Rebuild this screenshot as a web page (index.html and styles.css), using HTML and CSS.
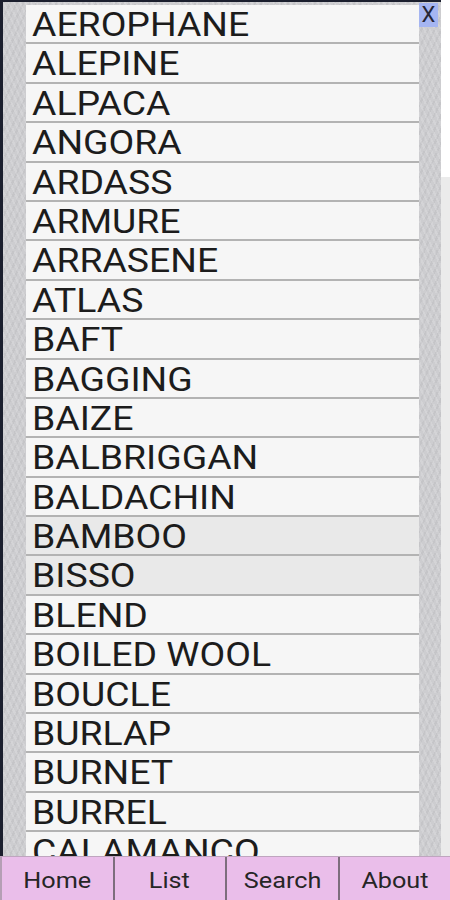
FILE: index.html
```html
<!DOCTYPE html>
<html>
<head>
<meta charset="utf-8">
<link rel="stylesheet" href="styles.css">
</head>
<body>
<div class="screen">
  <div class="main">
    <div class="panel">
      <ul class="list">
        <li class="row"><span class="label">AEROPHANE</span></li>
        <li class="row"><span class="label">ALEPINE</span></li>
        <li class="row"><span class="label">ALPACA</span></li>
        <li class="row"><span class="label">ANGORA</span></li>
        <li class="row"><span class="label">ARDASS</span></li>
        <li class="row"><span class="label">ARMURE</span></li>
        <li class="row"><span class="label">ARRASENE</span></li>
        <li class="row"><span class="label">ATLAS</span></li>
        <li class="row"><span class="label">BAFT</span></li>
        <li class="row"><span class="label">BAGGING</span></li>
        <li class="row"><span class="label">BAIZE</span></li>
        <li class="row"><span class="label">BALBRIGGAN</span></li>
        <li class="row"><span class="label">BALDACHIN</span></li>
        <li class="row selected"><span class="label">BAMBOO</span></li>
        <li class="row selected"><span class="label">BISSO</span></li>
        <li class="row"><span class="label">BLEND</span></li>
        <li class="row"><span class="label">BOILED WOOL</span></li>
        <li class="row"><span class="label">BOUCLE</span></li>
        <li class="row"><span class="label">BURLAP</span></li>
        <li class="row"><span class="label">BURNET</span></li>
        <li class="row"><span class="label">BURREL</span></li>
        <li class="row"><span class="label">CALAMANCO</span></li>
      </ul>
      <div class="side">
        <button class="close">X</button>
      </div>
    </div>
    <div class="edge"></div>
  </div>
  <nav class="nav">
    <a class="tab"><span class="tab-label">Home</span></a>
    <a class="tab"><span class="tab-label">List</span></a>
    <a class="tab"><span class="tab-label">Search</span></a>
    <a class="tab"><span class="tab-label">About</span></a>
  </nav>
</div>
</body>
</html>
```
FILE: styles.css
```css
html, body {
  margin: 0;
  padding: 0;
}
body {
  background: #1b1f2e;
  font-family: Roboto, "Liberation Sans", Arial, sans-serif;
}
.screen {
  width: 450px;
  height: 900px;
  display: flex;
  flex-direction: column;
  overflow: hidden;
}
.main {
  flex: 1;
  display: flex;
  min-height: 0;
  padding-left: 3px;
}
.panel {
  width: 438px;
  margin-top: 2px;
  display: flex;
  padding-left: 23px;
  box-sizing: border-box;
  background-color: #cdcdd0;
  background-image:
    repeating-linear-gradient(65deg, rgba(255,255,255,0.14) 0 2px, rgba(0,0,0,0) 2px 5px),
    repeating-linear-gradient(-65deg, rgba(0,0,0,0.04) 0 2px, rgba(0,0,0,0) 2px 6px);
  overflow: hidden;
}
.list {
  list-style: none;
  margin: 3px 0 0 0;
  padding: 0;
  width: 393px;
  flex: none;
}
.row {
  height: 37.4px;
  box-sizing: content-box;
  border-bottom: 2px solid #b3b3b3;
  background: #f6f6f6;
  color: #1c1c1c;
  font-size: 32.5px;
  line-height: 40px;
  padding-left: 6px;
  white-space: nowrap;
  overflow: hidden;
}
.label {
  display: inline-block;
  transform: scaleX(1.15);
  transform-origin: left center;
}
.row.selected {
  background: #e9e9e9;
}
.side {
  width: 22px;
  flex: none;
  display: flex;
  flex-direction: column;
  align-items: flex-start;
  padding-top: 1px;
}
.close {
  width: 19px;
  height: 24px;
  border: none;
  padding: 0;
  margin: 0;
  background: #a5b5f1;
  color: #262636;
  font-family: Roboto, "Liberation Sans", Arial, sans-serif;
  font-size: 22px;
  line-height: 24px;
}
.edge {
  width: 9px;
  flex: none;
  background: linear-gradient(#ffffff 0 177px, #ebebeb 177px);
}
.nav {
  height: 43px;
  flex: none;
  display: flex;
  background: #eabeea;
  border-top: 1px solid #bfa5bf;
}
.tab {
  flex: 1;
  display: flex;
  align-items: center;
  justify-content: center;
  font-size: 22.5px;
  color: #262626;
  border-left: 2px solid #7d6e7d;
  padding-top: 2px;
}
.tab:first-child {
  border-left: 2px solid #b59fb5;
}
.tab-label {
  display: inline-block;
  transform: scaleX(1.12);
}
```
